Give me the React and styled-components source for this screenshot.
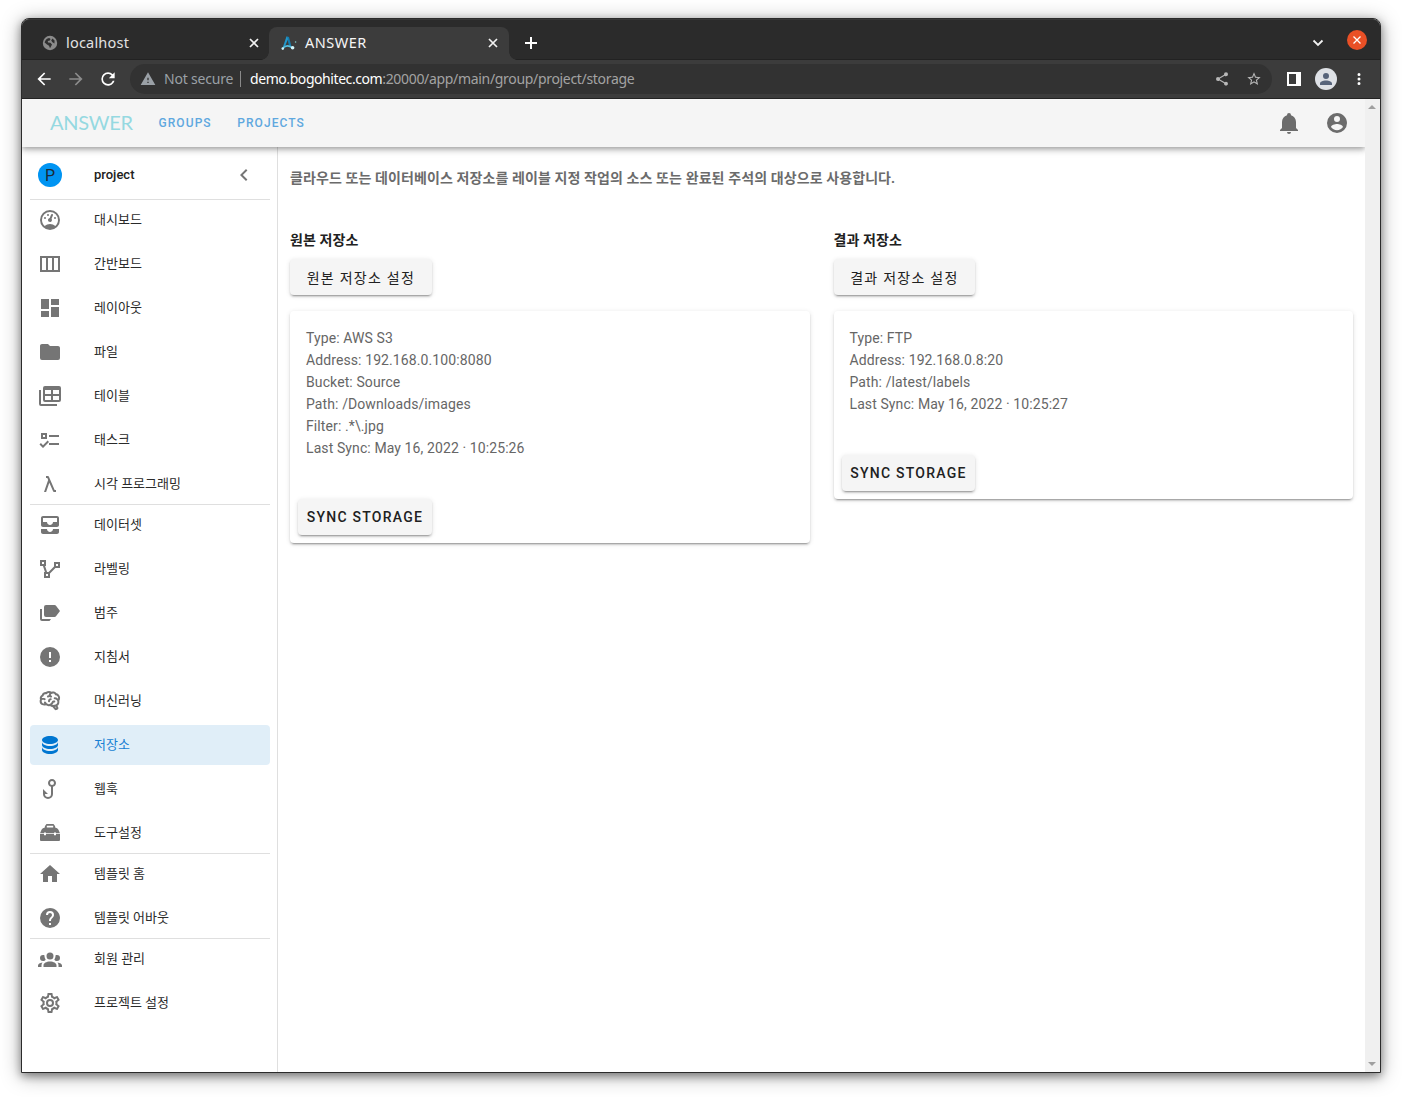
import React from "react";
import styled, { createGlobalStyle, css } from "styled-components";

const GlobalStyle = createGlobalStyle`
  *, *::before, *::after { box-sizing: border-box; }
  html, body { margin: 0; padding: 0; background: #fff; }
  body {
    width: 1402px;
    height: 1097px;
    overflow: hidden;
    font-family: Roboto, "Noto Sans CJK KR", sans-serif;
  }
`;

const Desktop = styled.div`
  width: 1402px;
  height: 1097px;
  padding: 18px 21px 24px;
  background: #fff;
`;

const Window = styled.div`
  display: flex;
  flex-direction: column;
  height: 1055px;
  border: 1px solid #2b2b2b;
  border-radius: 8px 8px 0 0;
  background: #fff;
  box-shadow: 0 3px 8px rgba(0, 0, 0, 0.38), 0 3px 20px rgba(0, 0, 0, 0.34);
`;

const TabStrip = styled.div`
  display: flex;
  flex: none;
  height: 41px;
  padding: 7px 0 0 12px;
  border-radius: 7px 7px 0 0;
  border-top: 1px solid #383838;
  border-bottom: 1px solid #222;
  background: #2b2b2b;
  font-family: "Noto Sans", sans-serif;
  color: #f2f2f2;
`;

const Tab = styled.div`
  display: flex;
  align-items: center;
  width: ${(p) => p.$width}px;
  height: ${(p) => (p.$active ? 34 : 33)}px;
  padding: 0 ${(p) => (p.$active ? 11 : 10)}px ${(p) => (p.$active ? 2 : 1)}px
    ${(p) => (p.$active ? 12 : 8)}px;
  gap: 8px;
  border-radius: 8px 8px 0 0;
  background: ${(p) => (p.$active ? "#3c3c3c" : "transparent")};
  color: ${(p) => (p.$active ? "#f6f6f6" : "#e2e2e2")};
  ${(p) =>
    p.$active &&
    css`
      position: relative;
      &::before,
      &::after {
        content: "";
        position: absolute;
        bottom: 1px;
        width: 8px;
        height: 8px;
      }
      &::before {
        left: -8px;
        background: radial-gradient(circle at 0 0, transparent 7.5px, #3c3c3c 8px);
      }
      &::after {
        right: -8px;
        background: radial-gradient(circle at 100% 0, transparent 7.5px, #3c3c3c 8px);
      }
    `}
`;

const TabTitle = styled.span`
  flex: 1;
  padding-bottom: 2px;
  font-size: 14.5px;
  letter-spacing: ${(p) => p.$spacing || 0}px;
  line-height: 20px;
`;

const NewTab = styled.div`
  display: flex;
  align-items: center;
  height: 31px;
  margin-left: 15px;
`;

const WindowControls = styled.div`
  display: flex;
  align-items: center;
  gap: 23px;
  height: 28px;
  margin: -1px 13px 0 auto;
`;

const ControlIcon = styled.div`
  display: flex;
  margin-top: ${(p) => p.$drop || 0}px;
`;

const CloseWindow = styled.div`
  display: flex;
  align-items: center;
  justify-content: center;
  width: 20px;
  height: 20px;
  border-radius: 50%;
  background: #e95026;
`;

const Toolbar = styled.div`
  display: flex;
  align-items: center;
  flex: none;
  height: 39px;
  padding: 0 12px 0 12px;
  border-bottom: 1px solid #232323;
  background: #3c3c3c;
  font-family: "Noto Sans", sans-serif;
`;

const NavButtons = styled.div`
  display: flex;
  align-items: center;
  gap: 12px;
  margin-right: 12px;
`;

const AddressBar = styled.div`
  display: flex;
  align-items: center;
  flex: 1;
  height: 30px;
  padding: 0 10px;
  border-radius: 15px;
  background: #323232;
  font-size: 14px;
  line-height: 20px;
`;

const Insecure = styled.span`
  width: 76px;
  margin-left: 8px;
  letter-spacing: -0.2px;
  color: #9aa0a6;
`;

const Divider = styled.span`
  width: 1px;
  height: 16px;
  margin-right: 9px;
  background: #8a8a8a;
`;

const Url = styled.span`
  flex: 1;
  white-space: nowrap;
  color: #a3a3a3;
`;

const Domain = styled.span`
  letter-spacing: -0.43px;
  color: #fff;
`;

const Path = styled.span`
  letter-spacing: -0.32px;
`;

const AddressActions = styled.div`
  display: flex;
  align-items: center;
  gap: 16px;
`;

const BrowserActions = styled.div`
  display: flex;
  align-items: center;
  gap: 13px;
  width: 96px;
  padding-left: 14px;
`;

const Profile = styled.div`
  display: flex;
  flex: none;
  align-items: center;
  justify-content: center;
  width: 22px;
  height: 22px;
  border-radius: 50%;
  background: #dee1e6;
`;

const Viewport = styled.div`
  display: flex;
  flex: 1;
  min-height: 0;
`;

const Page = styled.div`
  display: flex;
  flex-direction: column;
  flex: 1;
  min-width: 0;
  overflow: hidden;
`;

const Scrollbar = styled.div`
  display: flex;
  flex-direction: column;
  justify-content: space-between;
  align-items: flex-start;
  width: 15px;
  padding: 6px 3px;
  background: #f0f0f0;
`;

const Arrow = styled.i`
  border: 4px solid transparent;
  border-top-width: 0;
  border-bottom: 4px solid #9f9f9f;
  transform: ${(p) => (p.$down ? "rotate(180deg)" : "none")};
`;

const AppBar = styled.header`
  display: flex;
  align-items: center;
  flex: none;
  z-index: 1;
  height: 48px;
  padding: 0 16px 0 28px;
  background: #f5f5f5;
  box-shadow: 0 2px 4px -1px rgba(0, 0, 0, 0.2), 0 4px 5px rgba(0, 0, 0, 0.14),
    0 1px 10px rgba(0, 0, 0, 0.12);
`;

const Brand = styled.span`
  width: 108.5px;
  padding-bottom: 2px;
  font-family: Lato, sans-serif;
  font-size: 20px;
  font-weight: 400;
  letter-spacing: -0.25px;
  line-height: 24px;
  color: #95d9e1;
`;

const NavLink = styled.a`
  margin-right: 25.5px;
  font-size: 12px;
  font-weight: 500;
  letter-spacing: 1.07px;
  line-height: 24px;
  color: #5fa8df;
`;

const AppBarIcons = styled.div`
  display: flex;
  gap: 24px;
  margin-left: auto;
  color: #6c6c6c;
`;

const Body = styled.div`
  display: flex;
  flex: 1;
`;

const Sidebar = styled.nav`
  display: flex;
  flex-direction: column;
  width: 256px;
  flex: none;
  padding: 4px 7px 0 8px;
  border-right: 1px solid #dfdfdf;
`;

const ProjectRow = styled.div`
  display: flex;
  align-items: center;
  height: 48px;
  padding: 0 14px 0 8px;
`;

const Avatar = styled.div`
  width: 24px;
  height: 24px;
  margin-right: 32px;
  border-radius: 50%;
  background: #0094f2;
  font-size: 16px;
  line-height: 25px;
  text-align: center;
  color: #1c2a35;
`;

const ProjectName = styled.span`
  flex: 1;
  font-size: 13px;
  font-weight: 500;
  line-height: 16px;
  color: #212121;
`;

const Group = styled.div`
  display: flex;
  flex-direction: column;
  gap: 4px;
  border-top: 1px solid #dfdfdf;
`;

const Item = styled.a`
  display: flex;
  align-items: center;
  height: 40px;
  padding: 0 8px;
  gap: 32px;
  border-radius: 4px;
  background: ${(p) => (p.$active ? "#e0eef8" : "transparent")};
  color: ${(p) => (p.$active ? "#0076d1" : "#757575")};
`;

const ItemLabel = styled.span`
  font-size: 13px;
  line-height: 16px;
  color: ${(p) => (p.$active ? "#1880d3" : "#2a2a2a")};
`;

const Main = styled.main`
  flex: 1;
  color: #212121;
`;

const Intro = styled.p`
  margin: 0;
  padding: 20px 12px 0;
  font-size: 14px;
  font-weight: 700;
  letter-spacing: 0.1px;
  line-height: 22px;
  color: #6b6b6b;
`;

const Columns = styled.div`
  display: grid;
  grid-template-columns: 1fr 1fr;
  align-items: start;
  margin-top: 40px;
`;

const Column = styled.section`
  padding: 0 12px;
`;

const ColumnTitle = styled.h2`
  margin: 0 0 8px;
  font-size: 14px;
  font-weight: 700;
  letter-spacing: 0.1px;
  line-height: 22px;
`;

const Button = styled.button`
  display: block;
  height: 36px;
  padding: 0 ${(p) => (p.$compact ? 8.7 : 16.7)}px;
  border: 0;
  border-radius: 4px;
  background: #f5f5f5;
  font: ${(p) => (p.$compact ? 500 : 400)} 14px Roboto, "Noto Sans CJK KR", sans-serif;
  letter-spacing: 1.25px;
  color: #212121;
  box-shadow: 0 3px 1px -2px rgba(0, 0, 0, 0.2), 0 2px 2px rgba(0, 0, 0, 0.14),
    0 1px 5px rgba(0, 0, 0, 0.12);
`;

const Card = styled.article`
  margin-top: 16px;
  padding: 16px 8px 8px;
  border-radius: 4px;
  background: #fff;
  box-shadow: 0 3px 1px -2px rgba(0, 0, 0, 0.2), 0 2px 2px rgba(0, 0, 0, 0.14),
    0 1px 5px rgba(0, 0, 0, 0.12);
`;

const Details = styled.div`
  padding: 0 8px;
  margin-bottom: 40px;
  font-size: 14px;
  line-height: 22px;
  letter-spacing: 0.1px;
  color: #666;
`;

const iconPaths = {
  bell: "M21,19V20H3V19L5,17V11C5,7.9 7.03,5.17 10,4.29C10,4.19 10,4.1 10,4A2,2 0 0,1 12,2A2,2 0 0,1 14,4C14,4.1 14,4.19 14,4.29C16.97,5.17 19,7.9 19,11V17L21,19M14,21A2,2 0 0,1 12,23A2,2 0 0,1 10,21",
  account:
    "M12,19.2C9.5,19.2 7.29,17.92 6,16C6.03,14 10,12.9 12,12.9C14,12.9 17.97,14 18,16C16.71,17.92 14.5,19.2 12,19.2M12,5A3,3 0 0,1 15,8A3,3 0 0,1 12,11A3,3 0 0,1 9,8A3,3 0 0,1 12,5M12,2A10,10 0 0,0 2,12A10,10 0 0,0 12,22A10,10 0 0,0 22,12C22,6.47 17.5,2 12,2Z",
  chevronLeft: "M15.41,16.58L10.83,12L15.41,7.41L14,6L8,12L14,18L15.41,16.58Z",
  gauge:
    "M12,2A10,10 0 0,0 2,12A10,10 0 0,0 12,22A10,10 0 0,0 22,12A10,10 0 0,0 12,2M12,4A8,8 0 0,1 20,12C20,14.4 19,16.5 17.3,18C15.9,16.7 14,16 12,16C10,16 8.2,16.7 6.7,18C5,16.5 4,14.4 4,12A8,8 0 0,1 12,4M14,5.89C13.62,5.9 13.26,6.15 13.1,6.54L11.81,9.77L11.71,10C11,10.13 10.41,10.6 10.14,11.26C9.73,12.29 10.23,13.45 11.26,13.86C12.29,14.27 13.45,13.77 13.86,12.74C14.12,12.08 14,11.32 13.57,10.76L13.67,10.5L14.96,7.29L14.97,7.26C15.17,6.75 14.92,6.17 14.41,5.96C14.28,5.91 14.15,5.89 14,5.89M10,6A1,1 0 0,0 9,7A1,1 0 0,0 10,8A1,1 0 0,0 11,7A1,1 0 0,0 10,6M7,9A1,1 0 0,0 6,10A1,1 0 0,0 7,11A1,1 0 0,0 8,10A1,1 0 0,0 7,9M17,9A1,1 0 0,0 16,10A1,1 0 0,0 17,11A1,1 0 0,0 18,10A1,1 0 0,0 17,9Z",
  board: "M2,4H22V20H2V4M4,6V18H8V6H4M10,6V18H14V6H10M16,6V18H20V6H16Z",
  dashboard: "M13,3V9H21V3M13,21H21V11H13M3,21H11V15H3M3,13H11V3H3V13Z",
  folder:
    "M10,4H4C2.89,4 2,4.89 2,6V18A2,2 0 0,0 4,20H20A2,2 0 0,0 22,18V8C22,6.89 21.1,6 20,6H12L10,4Z",
  table:
    "M7,2H21A2,2 0 0,1 23,4V16A2,2 0 0,1 21,18H7A2,2 0 0,1 5,16V4A2,2 0 0,1 7,2M7,6V10H13V6H7M15,6V10H21V6H15M7,12V16H13V12H7M15,12V16H21V12H15M1,6V20A2,2 0 0,0 3,22H19V20H3V6H1Z",
  tasks:
    "M3,5H9V11H3V5M5,7V9H7V7H5M11,7H21V9H11V7M11,15H21V17H11V15M5,20L1.5,16.5L2.91,15.09L5,17.17L9.59,12.59L11,14L5,20Z",
  lambda:
    "M6,20L10.16,7.91L9.34,6H8V4H10C10.42,4 10.78,4.26 10.93,4.63L16.66,18H18V20H16C15.57,20 15.21,19.73 15.07,19.36L11.33,10.65L8.12,20H6Z",
  inbox:
    "M19 3H5c-1.1 0-2 .9-2 2v7c0 1.1.9 2 2 2h14c1.1 0 2-.9 2-2V5c0-1.1-.9-2-2-2zm0 6h-4c0 1.62-1.38 3-3 3s-3-1.38-3-3H5V5h14v4zm-4 7h6v3c0 1.1-.9 2-2 2H5c-1.1 0-2-.9-2-2v-3h6c0 1.66 1.34 3 3 3s3-1.34 3-3z",
  polyline:
    "M2,3V9H4.95L6.95,15H6V21H12V16.41L17.41,11H22V5H16V9.57L10.59,15H9.06L7.06,9H8V3M4,5H6V7H4M18,7H20V9H18M8,17H10V19H8",
  labels:
    "M8,4H16.5C17.2,4 17.8,4.3 18.2,4.9L22,10L18.2,15.1C17.8,15.7 17.2,16 16.5,16H8A2,2 0 0,1 6,14V6A2,2 0 0,1 8,4M2,8H4V18H13L11.5,20H4A2,2 0 0,1 2,18V8Z",
  alert:
    "M13,13H11V7H13M13,17H11V15H13M12,2A10,10 0 0,0 2,12A10,10 0 0,0 12,22A10,10 0 0,0 22,12A10,10 0 0,0 12,2Z",
  brain:
    "M21.33,12.91C21.42,14.46 20.71,15.95 19.44,16.86L20.21,18.35C20.44,18.8 20.47,19.33 20.27,19.8C20.08,20.27 19.69,20.64 19.21,20.8L18.42,21.05C18.25,21.11 18.06,21.14 17.88,21.14C17.37,21.14 16.89,20.91 16.56,20.5L14.44,18C13.55,17.85 12.71,17.47 12,16.9C11.5,17.05 11,17.13 10.5,17.13C9.62,17.13 8.74,16.86 8,16.34C7.47,16.5 6.93,16.57 6.38,16.56C5.59,16.57 4.81,16.41 4.08,16.11C2.65,15.47 1.7,14.07 1.65,12.5C1.57,11.78 1.69,11.05 2,10.39C1.71,9.64 1.68,8.82 1.93,8.06C2.3,7.11 3,6.32 3.87,5.82C4.45,4.13 6.08,3 7.87,3.12C9.47,1.62 11.92,1.46 13.7,2.75C14.12,2.64 14.56,2.58 15,2.58C16.36,2.55 17.65,3.15 18.5,4.22C20.54,4.75 22,6.57 22.08,8.69C22.13,9.8 21.83,10.89 21.22,11.82C21.29,12.18 21.33,12.54 21.33,12.91M16.33,11.5C16.9,11.57 17.35,12 17.35,12.57A1,1 0 0,1 16.35,13.57H15.72C15.4,14.47 14.84,15.26 14.1,15.86C14.35,15.95 14.61,16 14.87,16.07C20,16 19.4,12.87 19.4,12.82C19.34,11.39 18.14,10.27 16.71,10.33A1,1 0 0,1 15.71,9.33A1,1 0 0,1 16.71,8.33C17.94,8.36 19.12,8.82 20.04,9.63C20.09,9.34 20.12,9.04 20.12,8.74C20.06,7.5 19.5,6.42 17.25,6.21C16,3.25 12.85,4.89 12.85,5.81V5.81C12.82,6.04 13.06,6.53 13.1,6.56A1,1 0 0,1 14.1,7.56C14.1,8.11 13.65,8.56 13.1,8.56V8.56C12.57,8.54 12.07,8.34 11.67,8C11.19,8.31 10.64,8.5 10.07,8.56V8.56C9.5,8.61 9.03,8.21 9,7.66C8.92,7.1 9.33,6.61 9.88,6.56C10.04,6.54 10.82,6.42 10.82,5.79V5.79C10.82,5.13 11.07,4.5 11.5,4C10.58,3.75 9.59,4.08 8.59,5.29C6.75,5 6,5.25 5.45,7.2C4.5,7.67 4,8 3.78,9C4.86,8.78 5.97,8.87 7,9.25C7.5,9.44 7.78,10 7.59,10.54C7.4,11.06 6.82,11.32 6.3,11.13C5.57,10.81 4.75,10.79 4,11.07C3.68,11.34 3.68,11.9 3.68,12.34C3.68,13.08 4.05,13.77 4.68,14.17C5.21,14.44 5.8,14.58 6.39,14.57C6.24,14.31 6.11,14.04 6,13.76C5.81,13.22 6.1,12.63 6.64,12.44C7.18,12.25 7.77,12.54 7.96,13.08C8.36,14.22 9.38,15 10.58,15.13C11.95,15.06 13.17,14.25 13.77,13C14,11.62 15.11,11.5 16.33,11.5M18.33,18.97L17.71,17.67L17,17.83L18,19.08L18.33,18.97M13.68,10.36C13.7,9.83 13.3,9.38 12.77,9.33C12.06,9.29 11.37,9.53 10.84,10C10.27,10.58 9.97,11.38 10,12.19A1,1 0 0,0 11,13.19C11.57,13.19 12,12.74 12,12.19C12,11.92 12.07,11.65 12.23,11.43C12.35,11.33 12.5,11.28 12.66,11.28C13.21,11.31 13.68,10.9 13.68,10.36Z",
  database:
    "M12,3C7.58,3 4,4.79 4,7C4,9.21 7.58,11 12,11C16.42,11 20,9.21 20,7C20,4.79 16.42,3 12,3M4,9V12C4,14.21 7.58,16 12,16C16.42,16 20,14.21 20,12V9C20,11.21 16.42,13 12,13C7.58,13 4,11.21 4,9M4,14V17C4,19.21 7.58,21 12,21C16.42,21 20,19.21 20,17V14C20,16.21 16.42,18 12,18C7.58,18 4,16.21 4,14Z",
  hook: "M18,6C18,7.82 16.76,9.41 15,9.86V17A5,5 0 0,1 10,22A5,5 0 0,1 5,17V12L10,17H7A3,3 0 0,0 10,20A3,3 0 0,0 13,17V9.86C11.23,9.4 10,7.8 10,5.97C10,3.76 11.8,2 14,2C16.22,2 18,3.79 18,6M14,8A2,2 0 0,0 16,6A2,2 0 0,0 14,4A2,2 0 0,0 12,6A2,2 0 0,0 14,8Z",
  toolbox:
    "M18,14.2H16V13H8V14.2H6V13H2V19A1,1 0 0,0 3,20H21A1,1 0 0,0 22,19V13H18V14.2M2,12.3L3.3,9.2C4,7.8 5,7 6.6,6.8L7,5L8.5,3H15.5L17,5L17.4,6.8C19,7 20,7.8 20.7,9.2L22,12.3H18V11.5H16V12.3H8V11.5H6V12.3H2M8.8,6.6H15.2V4.8H8.8V6.6Z",
  home: "M10,20V14H14V20H19V12H22L12,3L2,12H5V20H10Z",
  help: "M15.07,11.25L14.17,12.17C13.45,12.89 13,13.5 13,15H11V14.5C11,13.39 11.45,12.39 12.17,11.67L13.41,10.41C13.78,10.05 14,9.55 14,9C14,7.89 13.1,7 12,7A2,2 0 0,0 10,9H8A4,4 0 0,1 12,5A4,4 0 0,1 16,9C16,9.88 15.64,10.67 15.07,11.25M13,19H11V17H13M12,2A10,10 0 0,0 2,12A10,10 0 0,0 12,22A10,10 0 0,0 22,12C22,6.47 17.5,2 12,2Z",
  group:
    "M12,5.5A3.5,3.5 0 0,1 15.5,9A3.5,3.5 0 0,1 12,12.5A3.5,3.5 0 0,1 8.5,9A3.5,3.5 0 0,1 12,5.5M5,8C5.56,8 6.08,8.15 6.53,8.42C6.38,9.85 6.8,11.27 7.66,12.38C7.16,13.34 6.16,14 5,14A3,3 0 0,1 2,11A3,3 0 0,1 5,8M19,8A3,3 0 0,1 22,11A3,3 0 0,1 19,14C17.84,14 16.84,13.34 16.34,12.38C17.2,11.27 17.62,9.85 17.47,8.42C17.92,8.15 18.44,8 19,8M5.5,18.25C5.5,16.18 8.41,14.5 12,14.5C15.59,14.5 18.5,16.18 18.5,18.25V20H5.5V18.25M0,20V18.5C0,17.11 1.89,15.94 4.45,15.6C3.86,16.28 3.5,17.22 3.5,18.25V20H0M24,20H20.5V18.25C20.5,17.22 20.14,16.28 19.55,15.6C22.11,15.94 24,17.11 24,18.5V20Z",
  cog: "M12,8A4,4 0 0,1 16,12A4,4 0 0,1 12,16A4,4 0 0,1 8,12A4,4 0 0,1 12,8M12,10A2,2 0 0,0 10,12A2,2 0 0,0 12,14A2,2 0 0,0 14,12A2,2 0 0,0 12,10M10,22C9.75,22 9.54,21.82 9.5,21.58L9.13,18.93C8.5,18.68 7.96,18.34 7.44,17.94L4.95,18.95C4.73,19.03 4.46,18.95 4.34,18.73L2.34,15.27C2.21,15.05 2.27,14.78 2.46,14.63L4.57,12.97L4.5,12L4.57,11L2.46,9.37C2.27,9.22 2.21,8.95 2.34,8.73L4.34,5.27C4.46,5.05 4.73,4.96 4.95,5.05L7.44,6.05C7.96,5.66 8.5,5.32 9.13,5.07L9.5,2.42C9.54,2.18 9.75,2 10,2H14C14.25,2 14.46,2.18 14.5,2.42L14.87,5.07C15.5,5.32 16.04,5.66 16.56,6.05L19.05,5.05C19.27,4.96 19.54,5.05 19.66,5.27L21.66,8.73C21.79,8.95 21.73,9.22 21.54,9.37L19.43,11L19.5,12L19.43,13L21.54,14.63C21.73,14.78 21.79,15.05 21.66,15.27L19.66,18.73C19.54,18.95 19.27,19.04 19.05,18.95L16.56,17.95C16.04,18.34 15.5,18.68 14.87,18.93L14.5,21.58C14.46,21.82 14.25,22 14,22H10M11.25,4L10.88,6.61C9.68,6.86 8.62,7.5 7.85,8.39L5.44,7.35L4.69,8.65L6.8,10.2C6.4,11.37 6.4,12.64 6.8,13.8L4.68,15.36L5.43,16.66L7.86,15.62C8.63,16.5 9.68,17.14 10.87,17.38L11.24,20H12.76L13.13,17.39C14.32,17.14 15.37,16.5 16.14,15.62L18.57,16.66L19.32,15.36L17.2,13.81C17.6,12.64 17.6,11.37 17.2,10.2L19.31,8.65L18.56,7.35L16.15,8.39C15.38,7.5 14.32,6.86 13.12,6.62L12.75,4H11.25Z",
  back: "M20,11V13H8L13.5,18.5L12.08,19.92L4.16,12L12.08,4.08L13.5,5.5L8,11H20Z",
  forward: "M4,11V13H16L10.5,18.5L11.92,19.92L19.84,12L11.92,4.08L10.5,5.5L16,11H4Z",
  reload:
    "M17.65,6.35C16.2,4.9 14.21,4 12,4A8,8 0 0,0 4,12A8,8 0 0,0 12,20C15.73,20 18.84,17.45 19.73,14H17.65C16.83,16.33 14.61,18 12,18A6,6 0 0,1 6,12A6,6 0 0,1 12,6C13.66,6 15.14,6.69 16.22,7.78L13,11H20V4L17.65,6.35Z",
  warning: "M13,14H11V10H13M13,18H11V16H13M1,21H23L12,2L1,21Z",
  star: "M12,15.39L8.24,17.66L9.23,13.38L5.91,10.5L10.29,10.13L12,6.09L13.71,10.13L18.09,10.5L14.77,13.38L15.76,17.66M22,9.24L14.81,8.63L12,2L9.19,8.63L2,9.24L7.45,13.97L5.82,21L12,17.27L18.18,21L16.54,13.97L22,9.24Z",
  share:
    "M18,16.08C17.24,16.08 16.56,16.38 16.04,16.85L8.91,12.7C8.96,12.47 9,12.24 9,12C9,11.76 8.96,11.53 8.91,11.3L15.96,7.19C16.5,7.69 17.21,8 18,8A3,3 0 0,0 21,5A3,3 0 0,0 18,2A3,3 0 0,0 15,5C15,5.24 15.04,5.47 15.09,5.7L8.04,9.81C7.5,9.31 6.79,9 6,9A3,3 0 0,0 3,12A3,3 0 0,0 6,15C6.79,15 7.5,14.69 8.04,14.19L15.16,18.34C15.11,18.55 15.08,18.77 15.08,19C15.08,20.61 16.39,21.91 18,21.91C19.61,21.91 20.92,20.61 20.92,19A2.92,2.92 0 0,0 18,16.08Z",
  person: "M12,4A4,4 0 0,1 16,8A4,4 0 0,1 12,12A4,4 0 0,1 8,8A4,4 0 0,1 12,4M12,14C16.42,14 20,15.79 20,18V20H4V18C4,15.79 7.58,14 12,14Z",
  dots: "M12,16A2,2 0 0,1 14,18A2,2 0 0,1 12,20A2,2 0 0,1 10,18A2,2 0 0,1 12,16M12,10A2,2 0 0,1 14,12A2,2 0 0,1 12,14A2,2 0 0,1 10,12A2,2 0 0,1 12,10M12,4A2,2 0 0,1 14,6A2,2 0 0,1 12,8A2,2 0 0,1 10,6A2,2 0 0,1 12,4Z",
};

const Svg = styled.svg`
  display: block;
  flex: none;
`;

function Icon({ name, size = 24, color = "currentColor" }) {
  return (
    <Svg width={size} height={size} viewBox="0 0 24 24" fill={color}>
      <path d={iconPaths[name]} />
    </Svg>
  );
}

function CrossIcon() {
  return (
    <Svg width="10" height="10" viewBox="0 0 10 10" stroke="#f2f2f2" strokeWidth="1.7">
      <path d="M1 1l8 8M9 1l-8 8" />
    </Svg>
  );
}

function GlobeIcon() {
  return (
    <Svg width="16" height="16" viewBox="0 0 16 16">
      <circle cx="8" cy="8" r="7.2" fill="#8b8b8b" />
      <path d="M2.600 7.600C3 5.200 4.800 3.300 7.200 2.900l1.400 1-.8 1.500-2 .6.2 1.400 2.400.4 1.600 1.600-1 2-1 1.800-1-2.400-2-1.200zM10.400 3.400l2.200 2-.2 3.200-2-1.400-1.200-1.600z" fill="#2f2f2f" />
    </Svg>
  );
}

function AnswerMark() {
  return (
    <Svg width="16" height="16" viewBox="0 0 16 16" fill="none">
      <path d="M5.6 1.2L8 2l2.6 10-2.8-2z" fill="#127cb0" />
      <path d="M5.6 1.2L1.4 13.4 4.4 10.6 7 4z" fill="#2098cc" />
      <path d="M2 13C4.6 10.2 7.6 9.8 11.5 13" stroke="#55bfe0" strokeWidth="1.6" />
      <circle cx="1.8" cy="13.6" r="1.3" fill="#c9f2fb" />
      <circle cx="11.6" cy="12.8" r="1.8" fill="#d5f7fc" />
      <circle cx="14.6" cy="7" r="0.8" fill="#79d0cf" />
    </Svg>
  );
}

const menu = [
  [
    ["gauge", "대시보드"],
    ["board", "간반보드"],
    ["dashboard", "레이아웃"],
    ["folder", "파일"],
    ["table", "테이블"],
    ["tasks", "태스크"],
    ["lambda", "시각 프로그래밍"],
  ],
  [
    ["inbox", "데이터셋"],
    ["polyline", "라벨링"],
    ["labels", "범주"],
    ["alert", "지침서"],
    ["brain", "머신러닝"],
    ["database", "저장소"],
    ["hook", "웹훅"],
    ["toolbox", "도구설정"],
  ],
  [
    ["home", "템플릿 홈"],
    ["help", "템플릿 어바웃"],
  ],
  [
    ["group", "회원 관리"],
    ["cog", "프로젝트 설정"],
  ],
];

const storages = [
  {
    title: "원본 저장소",
    action: "원본 저장소 설정",
    lines: [
      "Type: AWS S3",
      "Address: 192.168.0.100:8080",
      "Bucket: Source",
      "Path: /Downloads/images",
      "Filter: .*\\.jpg",
      "Last Sync: May 16, 2022 · 10:25:26",
    ],
  },
  {
    title: "결과 저장소",
    action: "결과 저장소 설정",
    lines: [
      "Type: FTP",
      "Address: 192.168.0.8:20",
      "Path: /latest/labels",
      "Last Sync: May 16, 2022 · 10:25:27",
    ],
  },
];

function BrowserChrome() {
  return (
    <>
      <TabStrip>
        <Tab $width={235}>
          <GlobeIcon />
          <TabTitle $spacing={0.2}>localhost</TabTitle>
          <CrossIcon />
        </Tab>
        <Tab $active $width={240}>
          <AnswerMark />
          <TabTitle $spacing={0.5}>ANSWER</TabTitle>
          <CrossIcon />
        </Tab>
        <NewTab>
          <Svg width="14" height="14" viewBox="0 0 14 14" stroke="#fff" strokeWidth="2">
            <path d="M7 1v12M1 7h12" />
          </Svg>
        </NewTab>
        <WindowControls>
          <ControlIcon $drop={5}>
            <Svg width="12" height="8" viewBox="0 0 12 8" fill="none" stroke="#f2f2f2" strokeWidth="1.8">
              <path d="M1.5 1.5L6 6L10.5 1.5" />
            </Svg>
          </ControlIcon>
          <CloseWindow>
            <Svg width="8" height="8" viewBox="0 0 8 8" stroke="#fff" strokeWidth="1.3">
              <path d="M0.5 0.5L7.5 7.5M7.5 0.5L0.5 7.5" />
            </Svg>
          </CloseWindow>
        </WindowControls>
      </TabStrip>
      <Toolbar>
        <NavButtons>
          <Icon name="back" size={20} color="#fff" />
          <Icon name="forward" size={20} color="#8c8c8c" />
          <Icon name="reload" size={20} color="#fff" />
        </NavButtons>
        <AddressBar>
          <Icon name="warning" size={16} color="#9aa0a6" />
          <Insecure>Not secure</Insecure>
          <Divider />
          <Url>
            <Domain>demo.bogohitec.com</Domain>
            <Path>:20000/app/main/group/project/storage</Path>
          </Url>
          <AddressActions>
            <Icon name="share" size={16} color="#b8b8b8" />
            <Icon name="star" size={16} color="#b8b8b8" />
          </AddressActions>
        </AddressBar>
        <BrowserActions>
          <Svg width="16" height="16" viewBox="0 0 16 16">
            <path d="M1 1h14v14H1zM3 3v10h7V3z" fill="#fff" fillRule="evenodd" />
          </Svg>
          <Profile>
            <Icon name="person" size={18} color="#56637a" />
          </Profile>
          <Icon name="dots" size={18} color="#fff" />
        </BrowserActions>
      </Toolbar>
    </>
  );
}

function ProjectNav() {
  return (
    <Sidebar>
      <ProjectRow>
        <Avatar>P</Avatar>
        <ProjectName>project</ProjectName>
        <Icon name="chevronLeft" color="#757575" />
      </ProjectRow>
      {menu.map((items) => (
        <Group key={items[0][1]}>
          {items.map(([icon, label]) => {
            const active = icon === "database";
            return (
              <Item key={label} $active={active}>
                <Icon name={icon} />
                <ItemLabel $active={active}>{label}</ItemLabel>
              </Item>
            );
          })}
        </Group>
      ))}
    </Sidebar>
  );
}

function StorageColumn({ title, action, lines }) {
  return (
    <Column>
      <ColumnTitle>{title}</ColumnTitle>
      <Button>{action}</Button>
      <Card>
        <Details>
          {lines.map((line) => (
            <div key={line}>{line}</div>
          ))}
        </Details>
        <Button $compact>SYNC STORAGE</Button>
      </Card>
    </Column>
  );
}

export default function App() {
  return (
    <Desktop>
      <GlobalStyle />
      <Window>
        <BrowserChrome />
        <Viewport>
          <Page>
            <AppBar>
              <Brand>ANSWER</Brand>
              <NavLink>GROUPS</NavLink>
              <NavLink>PROJECTS</NavLink>
              <AppBarIcons>
                <Icon name="bell" />
                <Icon name="account" />
              </AppBarIcons>
            </AppBar>
            <Body>
              <ProjectNav />
              <Main>
                <Intro>
                  클라우드 또는 데이터베이스 저장소를 레이블 지정 작업의 소스 또는 완료된 주석의 대상으로 사용합니다.
                </Intro>
                <Columns>
                  {storages.map((s) => (
                    <StorageColumn key={s.title} {...s} />
                  ))}
                </Columns>
              </Main>
            </Body>
          </Page>
          <Scrollbar>
            <Arrow />
            <Arrow $down />
          </Scrollbar>
        </Viewport>
      </Window>
    </Desktop>
  );
}
